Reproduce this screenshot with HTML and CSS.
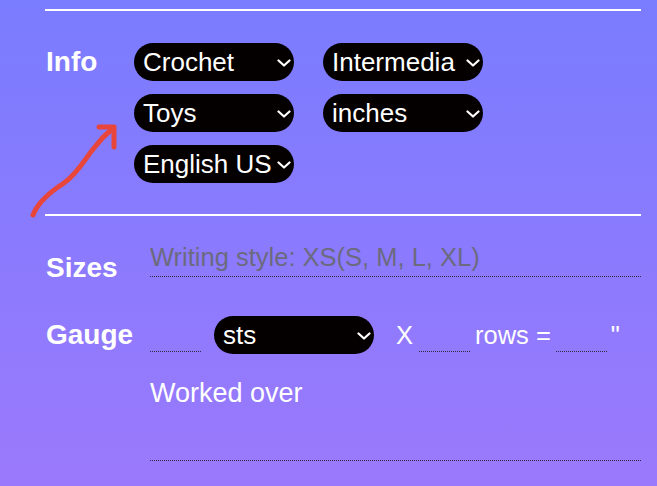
FILE: index.html
```html
<!DOCTYPE html>
<html lang="en">
<head>
  <meta charset="UTF-8" />
  <title>Pattern info</title>
  <link rel="stylesheet" href="styles.css">
</head>
<body>
  <div class="form">
    <hr class="rule" />

    <!-- Info -->
    <div class="info-row">
      <div class="label info-label">Info</div>
      <div class="select-grid">
        <span class="pick">
          <select><option>Crochet</option></select>
          <svg class="chev" width="14" height="8" viewBox="0 0 14 8"><path d="M1.5 1.5 L7 6.5 L12.5 1.5" /></svg>
        </span>
        <span class="pick">
          <select><option>Intermedia</option></select>
          <svg class="chev" width="14" height="8" viewBox="0 0 14 8"><path d="M1.5 1.5 L7 6.5 L12.5 1.5" /></svg>
        </span>
        <span class="pick">
          <select><option>Toys</option></select>
          <svg class="chev" width="14" height="8" viewBox="0 0 14 8"><path d="M1.5 1.5 L7 6.5 L12.5 1.5" /></svg>
        </span>
        <span class="pick">
          <select><option>inches</option></select>
          <svg class="chev" width="14" height="8" viewBox="0 0 14 8"><path d="M1.5 1.5 L7 6.5 L12.5 1.5" /></svg>
        </span>
        <span class="pick">
          <select><option>English US</option></select>
          <svg class="chev" width="14" height="8" viewBox="0 0 14 8"><path d="M1.5 1.5 L7 6.5 L12.5 1.5" /></svg>
        </span>
      </div>
    </div>

    <hr class="rule" />

    <!-- Sizes -->
    <div class="field-row sizes-row">
      <label class="label" for="sizes">Sizes</label>
      <input type="text" id="sizes" class="line wide" placeholder="Writing style: XS(S, M, L, XL)" />
    </div>

    <!-- Gauge -->
    <div class="field-row gauge-row">
      <label class="label" for="sts">Gauge</label>
      <input type="text" id="sts" class="line short" />
      <span class="pick gauge-pick">
        <select><option>sts</option></select>
        <svg class="chev" width="14" height="8" viewBox="0 0 14 8"><path d="M1.5 1.5 L7 6.5 L12.5 1.5" /></svg>
      </span>
      <span class="txt times">X</span>
      <input type="text" class="line short" />
      <span class="txt rows">rows =</span>
      <input type="text" class="line short" />
      <span class="txt inch">"</span>
    </div>

    <!-- Worked over -->
    <div class="worked">
      <div class="worked-title">Worked over</div>
      <textarea class="line area"></textarea>
    </div>
  </div>

  <!-- note arrow drawn over the page -->
  <svg class="arrow" width="110" height="110" viewBox="0 0 110 110">
    <path d="M13 105 C18 92, 30 82, 44 73 C58 63, 64 50, 74 38 C80 30, 86 24, 92 19" />
    <path d="M79 17 L94 17 L94 37" />
  </svg>
</body>
</html>
```

FILE: styles.css
```css
body { margin: 0; min-height: 486px; background: linear-gradient(#7a7cff, #9b79fc); font-family: "Liberation Sans", Arial, sans-serif; color: #fff; position: relative; overflow: hidden; }
.form { margin-left: 45px; width: 596px; padding-top: 9px; }
.rule { border: 0; border-top: 2px solid #fff; margin: 0; }
.label { font-size: 28px; font-weight: bold; }

.info-row { display: flex; padding: 32px 0 31px; }
.info-label { width: 89px; line-height: 38px; margin-left: 1px; margin-right: -1px; }
.select-grid { display: grid; grid-template-columns: 160px 160px; column-gap: 29px; row-gap: 13px; }

.pick { position: relative; display: block; width: 160px; height: 38px; }
.pick select { appearance: none; -webkit-appearance: none; width: 100%; height: 100%; margin: 0; border: 0; border-radius: 19px; background: #050000; color: #fff; font-family: inherit; font-size: 26px; padding: 0 9px; outline: none; }
.chev { position: absolute; right: 3px; top: 16px; pointer-events: none; }
.chev path { fill: none; stroke: #fff; stroke-width: 2.2; stroke-linecap: round; stroke-linejoin: round; }

.field-row { display: flex; }
.field-row .label { width: 104px; margin-left: 1px; }
.line { background: transparent; border: 0; border-bottom: 1px dotted #2c2a44; outline: none; font-family: inherit; color: #fff; margin: 0; padding: 0; }
.line::placeholder { color: #6b6a7e; }

.sizes-row { margin-top: 22px; align-items: flex-end; }
.sizes-row .label { margin-bottom: -7px; }
.wide { width: 491px; height: 38px; font-size: 25.5px; }

.gauge-row { margin-top: 39px; align-items: center; }
.short { width: 51px; height: 32px; font-size: 25px; margin-top: 1px; }
.gauge-pick { margin-left: 13px; }
.txt { font-size: 25.5px; }
.times { margin: 0 6px 0 22px; }
.rows { margin: 0 5px 0 5px; }
.inch { margin-left: 4px; }

.worked { margin-left: 105px; margin-top: 24px; }
.worked-title { font-size: 27px; line-height: 30px; }
.area { display: block; width: 491px; height: 52px; resize: none; font-size: 25px; }

.arrow { position: absolute; left: 20px; top: 110px; }
.arrow path { fill: none; stroke: #e8463a; stroke-width: 5; stroke-linecap: round; stroke-linejoin: round; }
```
